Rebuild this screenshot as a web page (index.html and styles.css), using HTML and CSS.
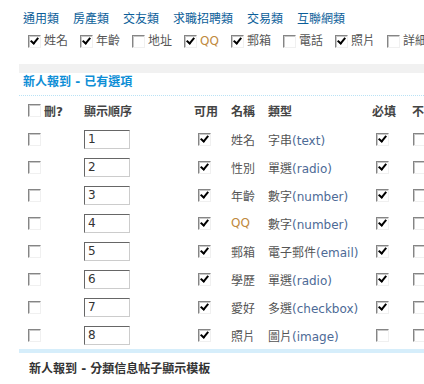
FILE: index.html
```html
<!DOCTYPE html>
<html lang="zh-Hant">
<head>
    <meta charset="UTF-8">
    <meta name="viewport" content="width=device-width, initial-scale=1">
    <title>分類信息 - 新人報到</title>
    <link rel="stylesheet" href="styles.css">
</head>
<body>
    <div class="nav">
        <a href="#">通用類</a>
        <a href="#">房產類</a>
        <a href="#">交友類</a>
        <a href="#">求職招聘類</a>
        <a href="#">交易類</a>
        <a href="#">互聯網類</a>
    </div>
    <div class="opts">
        <label class="opt"><input type="checkbox" checked>姓名</label>
        <label class="opt"><input type="checkbox" checked>年齡</label>
        <label class="opt"><input type="checkbox">地址</label>
        <label class="opt"><input type="checkbox" checked><span class="qq">QQ</span></label>
        <label class="opt"><input type="checkbox" checked>郵箱</label>
        <label class="opt"><input type="checkbox">電話</label>
        <label class="opt"><input type="checkbox" checked>照片</label>
        <label class="opt"><input type="checkbox">詳細地址</label>
    </div>

    <div class="section">
        <div class="gray-bar"></div>
        <h3 class="title">新人報到 - 已有選項</h3>
        <table class="list">
            <thead>
                <tr>
                    <th class="c-del"><label class="del"><input type="checkbox">刪?</label></th>
                    <th class="c-order">顯示順序</th>
                    <th class="c-on">可用</th>
                    <th class="c-name">名稱</th>
                    <th class="c-type">類型</th>
                    <th class="c-req">必填</th>
                    <th class="c-hide">不可見</th>
                </tr>
            </thead>
            <tbody>
                <tr>
                    <td class="c-del"><input type="checkbox"></td>
                    <td class="c-order"><input type="text" class="num" value="1"></td>
                    <td class="c-on"><input type="checkbox" checked></td>
                    <td class="c-name">姓名</td>
                    <td class="c-type">字串<span class="raw">(text)</span></td>
                    <td class="c-req"><input type="checkbox" checked></td>
                    <td class="c-hide"><input type="checkbox"></td>
                </tr>
                <tr>
                    <td class="c-del"><input type="checkbox"></td>
                    <td class="c-order"><input type="text" class="num" value="2"></td>
                    <td class="c-on"><input type="checkbox" checked></td>
                    <td class="c-name">性別</td>
                    <td class="c-type">單選<span class="raw">(radio)</span></td>
                    <td class="c-req"><input type="checkbox" checked></td>
                    <td class="c-hide"><input type="checkbox"></td>
                </tr>
                <tr>
                    <td class="c-del"><input type="checkbox"></td>
                    <td class="c-order"><input type="text" class="num" value="3"></td>
                    <td class="c-on"><input type="checkbox" checked></td>
                    <td class="c-name">年齡</td>
                    <td class="c-type">數字<span class="raw">(number)</span></td>
                    <td class="c-req"><input type="checkbox" checked></td>
                    <td class="c-hide"><input type="checkbox"></td>
                </tr>
                <tr>
                    <td class="c-del"><input type="checkbox"></td>
                    <td class="c-order"><input type="text" class="num" value="4"></td>
                    <td class="c-on"><input type="checkbox" checked></td>
                    <td class="c-name"><span class="qq">QQ</span></td>
                    <td class="c-type">數字<span class="raw">(number)</span></td>
                    <td class="c-req"><input type="checkbox" checked></td>
                    <td class="c-hide"><input type="checkbox"></td>
                </tr>
                <tr>
                    <td class="c-del"><input type="checkbox"></td>
                    <td class="c-order"><input type="text" class="num" value="5"></td>
                    <td class="c-on"><input type="checkbox" checked></td>
                    <td class="c-name">郵箱</td>
                    <td class="c-type">電子郵件<span class="raw">(email)</span></td>
                    <td class="c-req"><input type="checkbox" checked></td>
                    <td class="c-hide"><input type="checkbox"></td>
                </tr>
                <tr>
                    <td class="c-del"><input type="checkbox"></td>
                    <td class="c-order"><input type="text" class="num" value="6"></td>
                    <td class="c-on"><input type="checkbox" checked></td>
                    <td class="c-name">學歷</td>
                    <td class="c-type">單選<span class="raw">(radio)</span></td>
                    <td class="c-req"><input type="checkbox" checked></td>
                    <td class="c-hide"><input type="checkbox"></td>
                </tr>
                <tr>
                    <td class="c-del"><input type="checkbox"></td>
                    <td class="c-order"><input type="text" class="num" value="7"></td>
                    <td class="c-on"><input type="checkbox" checked></td>
                    <td class="c-name">愛好</td>
                    <td class="c-type">多選<span class="raw">(checkbox)</span></td>
                    <td class="c-req"><input type="checkbox" checked></td>
                    <td class="c-hide"><input type="checkbox"></td>
                </tr>
                <tr>
                    <td class="c-del"><input type="checkbox"></td>
                    <td class="c-order"><input type="text" class="num" value="8"></td>
                    <td class="c-on"><input type="checkbox" checked></td>
                    <td class="c-name">照片</td>
                    <td class="c-type">圖片<span class="raw">(image)</span></td>
                    <td class="c-req"><input type="checkbox"></td>
                    <td class="c-hide"><input type="checkbox"></td>
                </tr>
            </tbody>
        </table>
        <div class="blue-bar"></div>
        <h3 class="sub-title">新人報到 - 分類信息帖子顯示模板</h3>
    </div>
</body>
</html>
```

FILE: styles.css
```css
html {
    overflow: hidden;
}

body {
    margin: 0;
    padding: 0;
    font-family: "DejaVu Sans", Verdana, "Noto Sans CJK TC", sans-serif;
    font-size: 12px;
    color: #555;
    background: #fff;
    width: 520px;
}

/* classic checkbox */
input[type="checkbox"] {
    -webkit-appearance: none;
    appearance: none;
    position: relative;
    width: 13px;
    height: 13px;
    margin: 0;
    box-sizing: border-box;
    border: 1px solid;
    border-color: #858585 #f0f0f0 #f0f0f0 #858585;
    box-shadow: inset 1px 1px 0 #c8c8c8;
    background: #fff;
    vertical-align: middle;
    flex-shrink: 0;
}

input[type="checkbox"]:checked::after {
    content: "";
    position: absolute;
    left: 3px;
    top: 0px;
    width: 3px;
    height: 6px;
    border: solid #000;
    border-width: 0 2px 2px 0;
    transform: rotate(40deg);
}

.nav {
    display: flex;
    gap: 14px;
    padding: 10px 0 0 23px;
    height: 18px;
    line-height: 18px;
    white-space: nowrap;
}

.nav a {
    color: #0b5e99;
    text-decoration: none;
}

.opts {
    display: flex;
    padding: 4px 0 0 28px;
    height: 18px;
    line-height: 18px;
    white-space: nowrap;
}

.opt {
    display: flex;
    align-items: center;
    gap: 3px;
    margin-right: 12px;
}

.qq {
    color: #c08a3e;
}

.section {
    margin: 14px 0 0 19px;
}

.gray-bar {
    height: 9px;
    background: #f1f1f1;
}

.title {
    margin: 0;
    padding: 1px 0 0 4px;
    height: 21px;
    line-height: 17px;
    font-size: 12px;
    font-weight: bold;
    color: #0e8ed6;
    border-bottom: 1px dotted #b9e2f5;
    white-space: nowrap;
}

.list {
    border-collapse: collapse;
    table-layout: fixed;
    width: 480px;
    white-space: nowrap;
}

.list th,
.list td {
    padding: 0;
    text-align: left;
    vertical-align: middle;
}

.list th {
    height: 29px;
    font-weight: bold;
    color: #444;
}

.list td {
    height: 28px;
}

.c-del { width: 65px; padding-left: 9px !important; box-sizing: border-box; }
.c-order { width: 110px; }
.c-on { width: 37px; }
.c-name { width: 37px; }
.c-type { width: 104px; }
.c-req { width: 40px; }
.c-hide { width: 87px; }

.list td.c-on,
.list td.c-req {
    padding-left: 4px;
}

.list td.c-hide {
    padding-left: 1px;
}

.del {
    display: flex;
    align-items: center;
    gap: 3px;
}

.num {
    width: 46px;
    height: 19px;
    box-sizing: border-box;
    margin: 0;
    padding: 0 3px;
    border: 1px solid;
    border-color: #666 #ccc #ccc #666;
    font-family: "DejaVu Sans", Verdana, sans-serif;
    font-size: 12px;
    color: #333;
    vertical-align: middle;
}

.raw {
    color: #4d6a96;
}

.blue-bar {
    height: 4px;
    background: #d6eefb;
}

.sub-title {
    margin: 0;
    padding: 8px 0 0 10px;
    line-height: 17px;
    font-size: 12px;
    font-weight: bold;
    color: #333;
    white-space: nowrap;
}
```
